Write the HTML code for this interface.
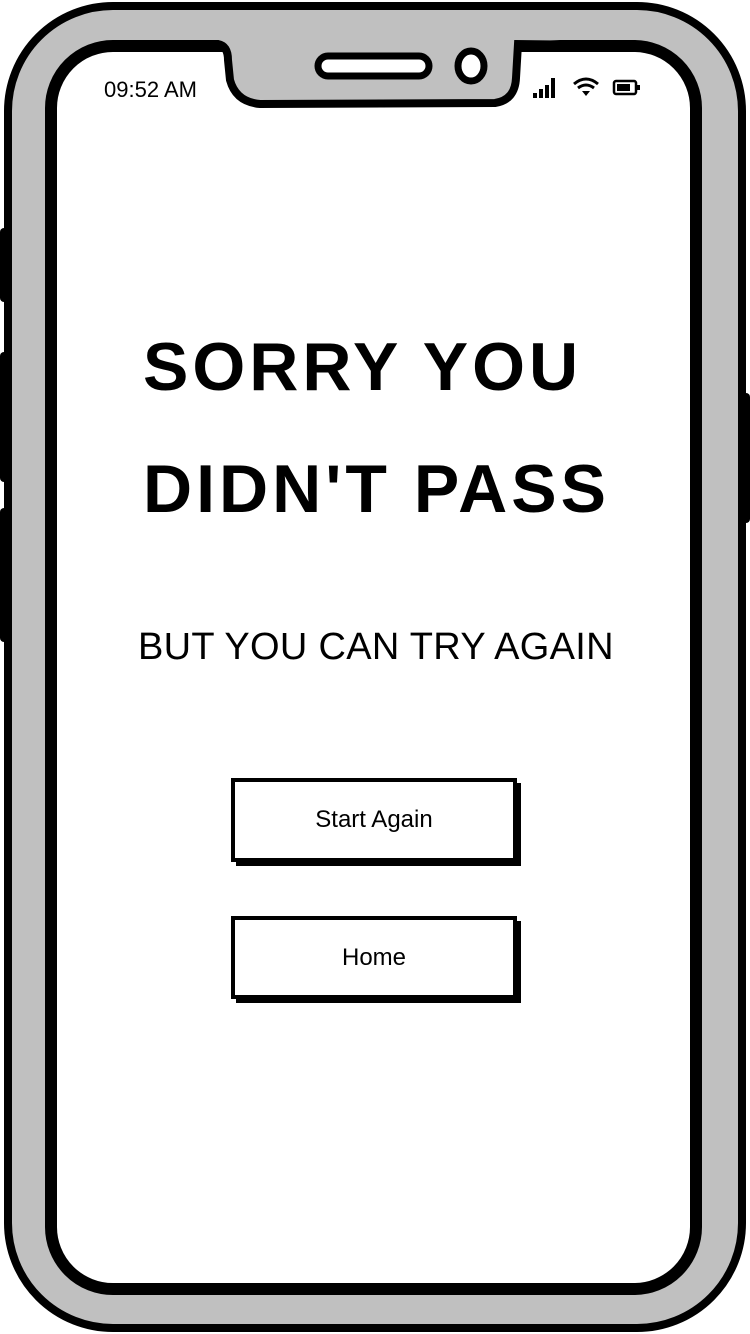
<!DOCTYPE html>
<html><head><style>
body{margin:0;width:750px;height:1334px;overflow:hidden;background:#fff;font-family:"Liberation Sans",sans-serif}
.t{position:absolute;white-space:nowrap;color:#000}
</style></head><body>
<svg width="750" height="1334" style="position:absolute;left:0;top:0">
<rect x="0" y="228" width="12" height="74" rx="4" fill="#000"/>
<rect x="0" y="352" width="12" height="130" rx="4" fill="#000"/>
<rect x="0" y="508" width="12" height="134" rx="4" fill="#000"/>
<rect x="738" y="393" width="12" height="130" rx="4" fill="#000"/>
<rect x="8" y="6" width="734" height="1322" rx="105" fill="#c0c0c0" stroke="#000" stroke-width="8"/>
<rect x="51" y="46" width="645" height="1243" rx="62" fill="#fff" stroke="#000" stroke-width="12"/>
<path d="M150 38 L218 40 Q230 44 230 60 L232 80 Q238 102 260 104 L495 103 Q515 100 518 78 L520 42 L600 38 Z" fill="#c0c0c0"/>
<path d="M152 44 L218 44 Q228 46 228 60 L230 80 Q236 102 260 104 L495 103 Q515 100 516 78 L518 44 L600 45" fill="none" stroke="#000" stroke-width="8"/>
<rect x="318" y="56" width="111" height="20" rx="10" fill="#fff" stroke="#000" stroke-width="7"/>
<ellipse cx="471" cy="66" rx="13" ry="15" fill="#fff" stroke="#000" stroke-width="7"/>
<rect x="533" y="93" width="4" height="5" fill="#000"/><rect x="539" y="89" width="4" height="9" fill="#000"/><rect x="545" y="85" width="4" height="13" fill="#000"/><rect x="551" y="78" width="4" height="20" fill="#000"/>
<path d="M574 84 Q586 74 598 84 M578 88 Q586 82 594 88" fill="none" stroke="#000" stroke-width="3"/>
<path d="M582 91 L590 91 L586 96 Z" fill="#000"/>
<rect x="614" y="81" width="22" height="13" rx="2" fill="none" stroke="#000" stroke-width="2.5"/>
<rect x="617" y="84" width="13" height="7" fill="#000"/><rect x="637" y="85" width="3" height="5" fill="#000"/>
<rect x="236" y="783" width="285" height="83" fill="#000"/>
<rect x="233" y="780" width="282" height="80" fill="#fff" stroke="#000" stroke-width="4"/>
<rect x="236" y="921" width="285" height="82" fill="#000"/>
<rect x="233" y="918" width="282" height="79" fill="#fff" stroke="#000" stroke-width="4"/>
</svg>
<div class="t" style="left:104px;top:77px;font-size:22px">09:52 AM</div>
<div class="t" style="left:143px;top:328px;font-size:68px;font-weight:bold;letter-spacing:4px">SORRY YOU</div>
<div class="t" style="left:143px;top:450px;font-size:68px;font-weight:bold;letter-spacing:4px">DIDN'T PASS</div>
<div class="t" style="left:138px;top:626px;font-size:38px;letter-spacing:0.3px">BUT YOU CAN TRY AGAIN</div>
<div class="t" style="left:233px;top:806px;width:282px;text-align:center;font-size:24px">Start Again</div>
<div class="t" style="left:233px;top:944px;width:282px;text-align:center;font-size:24px">Home</div>
</body></html>
